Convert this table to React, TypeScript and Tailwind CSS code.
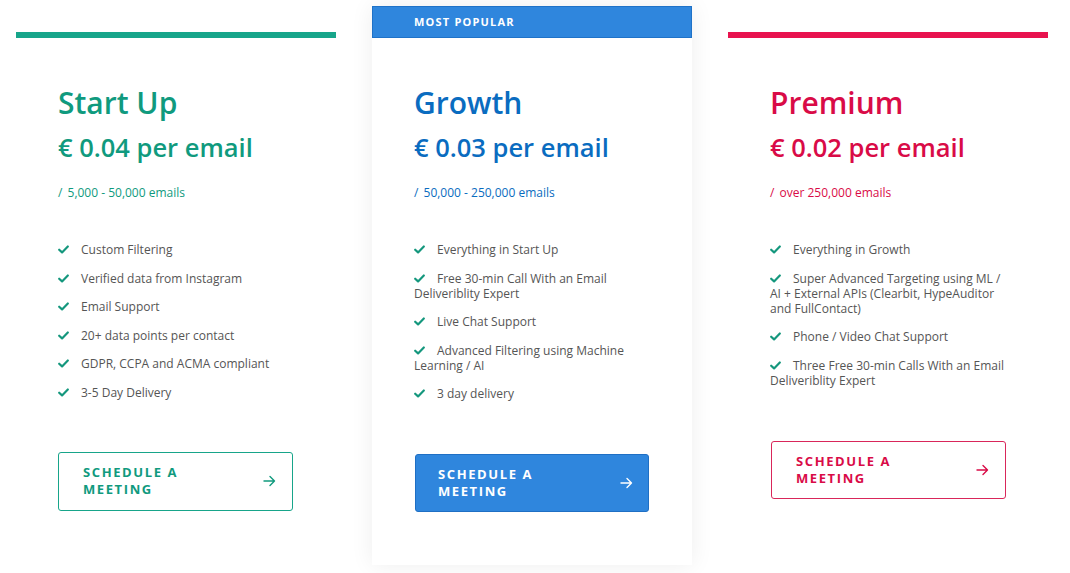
import React from "react";

const Check = () => (
  <svg width="11" height="9" viewBox="0 0 12 10" className="inline-block mr-[12px] align-[0px]">
    <path d="M1.2 5.2 L4.4 8.2 L10.8 1.6" fill="none" stroke="#14977d" strokeWidth="2.4" strokeLinecap="round" strokeLinejoin="round" />
  </svg>
);

const Arrow = ({ color }: { color: string }) => (
  <svg width="13" height="12" viewBox="0 0 13 12">
    <path d="M1 6 H11.5 M7 1.5 L11.5 6 L7 10.5" fill="none" stroke={color} strokeWidth="1.4" strokeLinecap="round" strokeLinejoin="round" />
  </svg>
);

function Features({ items }: { items: string[] }) {
  return (
    <ul className="flex flex-col gap-[13.5px] text-[12px] leading-[15px] text-[#555]">
      {items.map((f) => (
        <li key={f}>
          <Check />
          {f}
        </li>
      ))}
    </ul>
  );
}

export default function App() {
  return (
    <div className="w-[1070px] h-[573px] bg-white overflow-hidden flex items-start gap-[36px] pl-[16px] pt-[6px]" style={{ fontFamily: '"Open Sans", "Noto Sans", sans-serif' }}>
      {/* Start Up */}
      <div className="w-[320px] mt-[26px] flex flex-col">
        <div className="h-[6px] bg-[#17a58a]" />
        <div className="px-[42px] pt-[47px] flex flex-col">
          <h2 className="text-[30px] leading-[36px] font-semibold text-[#109a7e]">Start Up</h2>
          <div className="mt-[10px] text-[25.5px] leading-[32px] font-semibold text-[#109a7e]">€ 0.04 per email</div>
          <div className="mt-[21px] text-[12px] leading-[18px] text-[#109a7e]">/ <span className="ml-[2px]">5,000 - 50,000 emails</span></div>
          <div className="mt-[40px]">
            <Features items={["Custom Filtering", "Verified data from Instagram", "Email Support", "20+ data points per contact", "GDPR, CCPA and ACMA compliant", "3-5 Day Delivery"]} />
          </div>
          <button className="mt-[52px] w-[235px] h-[59px] border-[1.5px] border-[#17a58a] rounded-[3px] flex items-center justify-between pl-[24px] pr-[16px] text-left">
            <span className="text-[13px] leading-[17px] font-bold tracking-[1.6px] text-[#109a7e]">SCHEDULE A<br />MEETING</span>
            <Arrow color="#109a7e" />
          </button>
        </div>
      </div>

      {/* Growth */}
      <div className="w-[320px] h-[559px] flex flex-col bg-white shadow-[0_0_22px_rgba(0,0,0,0.07)]">
        <div className="h-[32px] bg-[#2f86dd] border border-[#1f72c8] flex items-center pl-[41px]">
          <span className="text-[11px] font-bold tracking-[1.2px] text-white">MOST POPULAR</span>
        </div>
        <div className="px-[42px] pt-[47px] flex flex-col">
          <h2 className="text-[30px] leading-[36px] font-semibold text-[#0a6cc0]">Growth</h2>
          <div className="mt-[10px] text-[25.5px] leading-[32px] font-semibold text-[#0a6cc0]">€ 0.03 per email</div>
          <div className="mt-[21px] text-[12px] leading-[18px] text-[#0a6cc0]">/ <span className="ml-[2px]">50,000 - 250,000 emails</span></div>
          <div className="mt-[40px]">
            <Features items={["Everything in Start Up", "Free 30-min Call With an Email Deliveriblity Expert", "Live Chat Support", "Advanced Filtering using Machine Learning / AI", "3 day delivery"]} />
          </div>
          <button className="mt-[53px] ml-[1px] w-[234px] h-[58px] bg-[#2f86dd] border border-[#1f6fc4] rounded-[3px] flex items-center justify-between pl-[22px] pr-[15px] text-left">
            <span className="text-[13px] leading-[17px] font-bold tracking-[1.6px] text-white">SCHEDULE A<br />MEETING</span>
            <Arrow color="#ffffff" />
          </button>
        </div>
      </div>

      {/* Premium */}
      <div className="w-[320px] mt-[26px] flex flex-col">
        <div className="h-[6px] bg-[#e8134f]" />
        <div className="px-[42px] pt-[47px] flex flex-col">
          <h2 className="text-[30px] leading-[36px] font-semibold text-[#d90b47]">Premium</h2>
          <div className="mt-[10px] text-[25.5px] leading-[32px] font-semibold text-[#d90b47]">€ 0.02 per email</div>
          <div className="mt-[21px] text-[12px] leading-[18px] text-[#d90b47]">/ <span className="ml-[2px]">over 250,000 emails</span></div>
          <div className="mt-[40px]">
            <Features items={["Everything in Growth", "Super Advanced Targeting using ML / AI + External APIs (Clearbit, HypeAuditor and FullContact)", "Phone / Video Chat Support", "Three Free 30-min Calls With an Email Deliveriblity Expert"]} />
          </div>
          <button className="mt-[53px] ml-[1px] w-[235px] h-[58px] border-[1.5px] border-[#d9265a] rounded-[3px] flex items-center justify-between pl-[24px] pr-[16px] text-left">
            <span className="text-[13px] leading-[17px] font-bold tracking-[1.6px] text-[#d90b47]">SCHEDULE A<br />MEETING</span>
            <Arrow color="#d90b47" />
          </button>
        </div>
      </div>
    </div>
  );
}
